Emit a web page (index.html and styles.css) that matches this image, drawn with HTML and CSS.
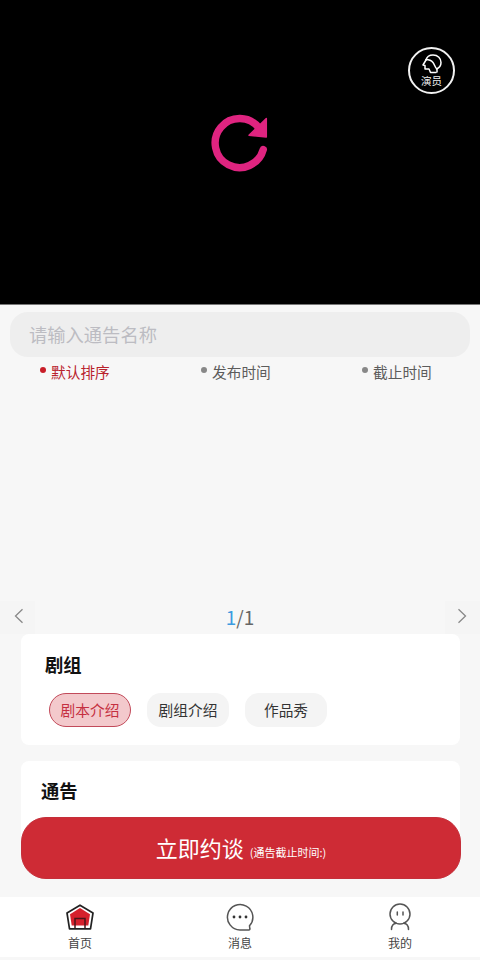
FILE: index.html
```html
<!DOCTYPE html>
<html lang="zh-CN">
<head>
<meta charset="utf-8">
<title>首页</title>
<link rel="stylesheet" href="styles.css">
</head>
<body>
<div class="app">
  <header class="hero">
    <svg class="reload" width="60" height="60" viewBox="0 0 60 60"><path d="M53.300 37.500A24.500 24.500 0 1 1 49 16" fill="none" stroke="#df2480" stroke-width="7.400" stroke-linecap="round"/><path d="M56.300 6.500v18.500L39 23.300z" fill="#df2480" stroke="#df2480" stroke-width="1.500" stroke-linejoin="round"/></svg>
    <button class="role">
      <svg width="22" height="20" viewBox="0 0 22 20" fill="none" stroke="#fff" stroke-width="1.500" stroke-linecap="round" stroke-linejoin="round"><path d="M5 6C6 2 9 1 12 1c5 0 8 3.500 8 7.500 0 3.500-2 5.500-4.500 6.500"/><path d="M5 6L2 11l2 .5v3.500h4l1.500 3.500h5.500"/><path d="M5 5.500c3 0 5 .5 7 3s1.500 4.500 4 6.500V18"/></svg>
      <span>演员</span>
    </button>
  </header>
  <main class="content">
    <div class="search">请输入通告名称</div>
    <nav class="sort">
      <span class="sort-item active">默认排序</span>
      <span class="sort-item">发布时间</span>
      <span class="sort-item">截止时间</span>
    </nav>
    <div class="pager">
      <span class="arrow"><svg width="10" height="16" viewBox="0 0 10 16"><path d="M8.500 1.200L1.500 8l7 6.800"/></svg></span>
      <span class="count"><b>1</b>/1</span>
      <span class="arrow next"><svg width="10" height="16" viewBox="0 0 10 16"><path d="M1.500 1.200l7 6.800-7 6.800"/></svg></span>
    </div>
    <section class="card crew">
      <h2>剧组</h2>
      <div class="chips">
        <span class="chip selected">剧本介绍</span>
        <span class="chip">剧组介绍</span>
        <span class="chip">作品秀</span>
      </div>
    </section>
    <section class="card notice"><h2>通告</h2></section>
    <button class="cta">立即约谈<small>(通告截止时间:)</small></button>
  </main>
  <footer class="tabs">
    <div class="tab">
      <svg width="30" height="28" viewBox="0 0 30 28"><path d="M15 2.200L28 10l-2.500 15.800h-21L2 10z" fill="#fff" stroke="#222" stroke-width="1.700" stroke-linejoin="round"/><path d="M15 5l10 6.200L23.300 22.500H6.700L5 11.200z" fill="#d6202c"/><path d="M10 25v-9.500h10V25" fill="none" stroke="#4a1518" stroke-width="1.500"/></svg>
      <span>首页</span>
    </div>
    <div class="tab">
      <svg width="30" height="28" viewBox="0 0 30 28"><path d="M24.500 22.800A12.700 12.700 0 1 0 15 26.900h8.800q1.400 0 1-1.400z" fill="none" stroke="#555" stroke-width="1.500"/><g fill="#333"><circle cx="9" cy="14" r="1.400"/><circle cx="15" cy="14" r="1.400"/><circle cx="21" cy="14" r="1.400"/></g></svg>
      <span>消息</span>
    </div>
    <div class="tab">
      <svg width="30" height="28" viewBox="0 0 30 28" fill="none" stroke="#555" stroke-width="1.500" stroke-linecap="round"><circle cx="15" cy="11" r="10"/><path d="M12.300 9v3M18 9v3M6.500 26.500c0-4 1.500-6 5-6.200M23.500 26.500c0-4-1.500-6-5-6.200"/></svg>
      <span>我的</span>
    </div>
  </footer>
</div>
</body>
</html>
```
FILE: styles.css
```css
* { box-sizing: border-box; }
body { margin: 0; font-family: "Noto Sans CJK SC", sans-serif; background: #f7f7f7; }
button { font-family: inherit; padding: 0; }
.app { width: 480px; height: 960px; display: flex; flex-direction: column; overflow: hidden; padding-bottom: 3px; }
.hero { position: relative; height: 305px; flex: none; background: #000; border-bottom: 1px solid #777; display: flex; justify-content: center; padding-top: 112px; }
.reload { display: block; margin-left: -1px; }
.role { position: absolute; left: 408px; top: 47px; width: 47px; height: 47px; border: 2px solid #f2f2f2; border-radius: 50%; background: #000; color: #eee; display: flex; flex-direction: column; align-items: center; padding-top: 5px; font-size: 10.5px; line-height: 13px; }
.role svg { display: block; flex: none; }
.content { position: relative; height: 592px; flex: none; padding-top: 7px; }
.search { margin: 0 10px; height: 45px; border-radius: 18px; background: #eee; color: #bcbcc2; font-size: 18.3px; line-height: 45px; padding-left: 19px; }
.sort { display: grid; grid-template-columns: repeat(3, 161px); padding-left: 40px; height: 28px; }
.sort-item { display: flex; align-items: center; gap: 5px; font-size: 14.7px; color: #5c5c5c; white-space: nowrap; }
.sort-item::before { content: ""; width: 6px; height: 6px; border-radius: 50%; background: #888; margin-top: -3px; }
.sort-item.active { color: #b9222c; }
.sort-item.active::before { background: #c81e28; }
.pager { margin-top: 216px; height: 33px; display: flex; justify-content: space-between; align-items: center; }
.arrow { width: 35px; height: 33px; background: #f5f5f5; display: flex; align-items: center; justify-content: center; padding: 0 0 4px 2px; }
.arrow.next { padding: 0 0 4px; }
.arrow svg { fill: none; stroke: #888; stroke-width: 1.3; }
.count { font-size: 19px; line-height: 30px; color: #666; margin-bottom: 2px; }
.count b { font-weight: 400; color: #3d9be0; }
.card { margin: 0 20px 0 21px; background: #fff; border-radius: 8px; }
.card h2 { margin: 0; font-size: 18.3px; line-height: 28px; font-weight: 700; color: #111; }
.crew { height: 111px; padding: 16px 0 0 24px; }
.chips { display: flex; gap: 16px; margin: 15px 0 0 4px; }
.chip { width: 82px; height: 34px; border-radius: 14px; background: #f4f4f4; color: #333; font-size: 14.7px; line-height: 34px; text-align: center; }
.chip.selected { border: 1px solid #c24a5a; border-radius: 17px; background: #f3c9cc; color: #c52f40; line-height: 32px; }
.notice { margin-top: 16px; height: 100px; padding: 15px 0 0 20px; }
.cta { position: absolute; left: 21px; top: 512px; width: 440px; height: 62px; border: 1px solid #c52f3a; border-radius: 25px; background: #ce2b35; color: #fff; font-size: 22px; line-height: 58px; padding-bottom: 2px; }
.cta small { font-size: 11px; margin-left: 6px; }
.tabs { height: 60px; flex: none; background: #fff; display: grid; grid-template-columns: repeat(3, 160px); }
.tab { display: flex; flex-direction: column; align-items: center; padding-top: 6px; font-size: 12px; line-height: 16px; color: #444; }
.tab svg { display: block; margin: 0 0 4px -1px; }
```
